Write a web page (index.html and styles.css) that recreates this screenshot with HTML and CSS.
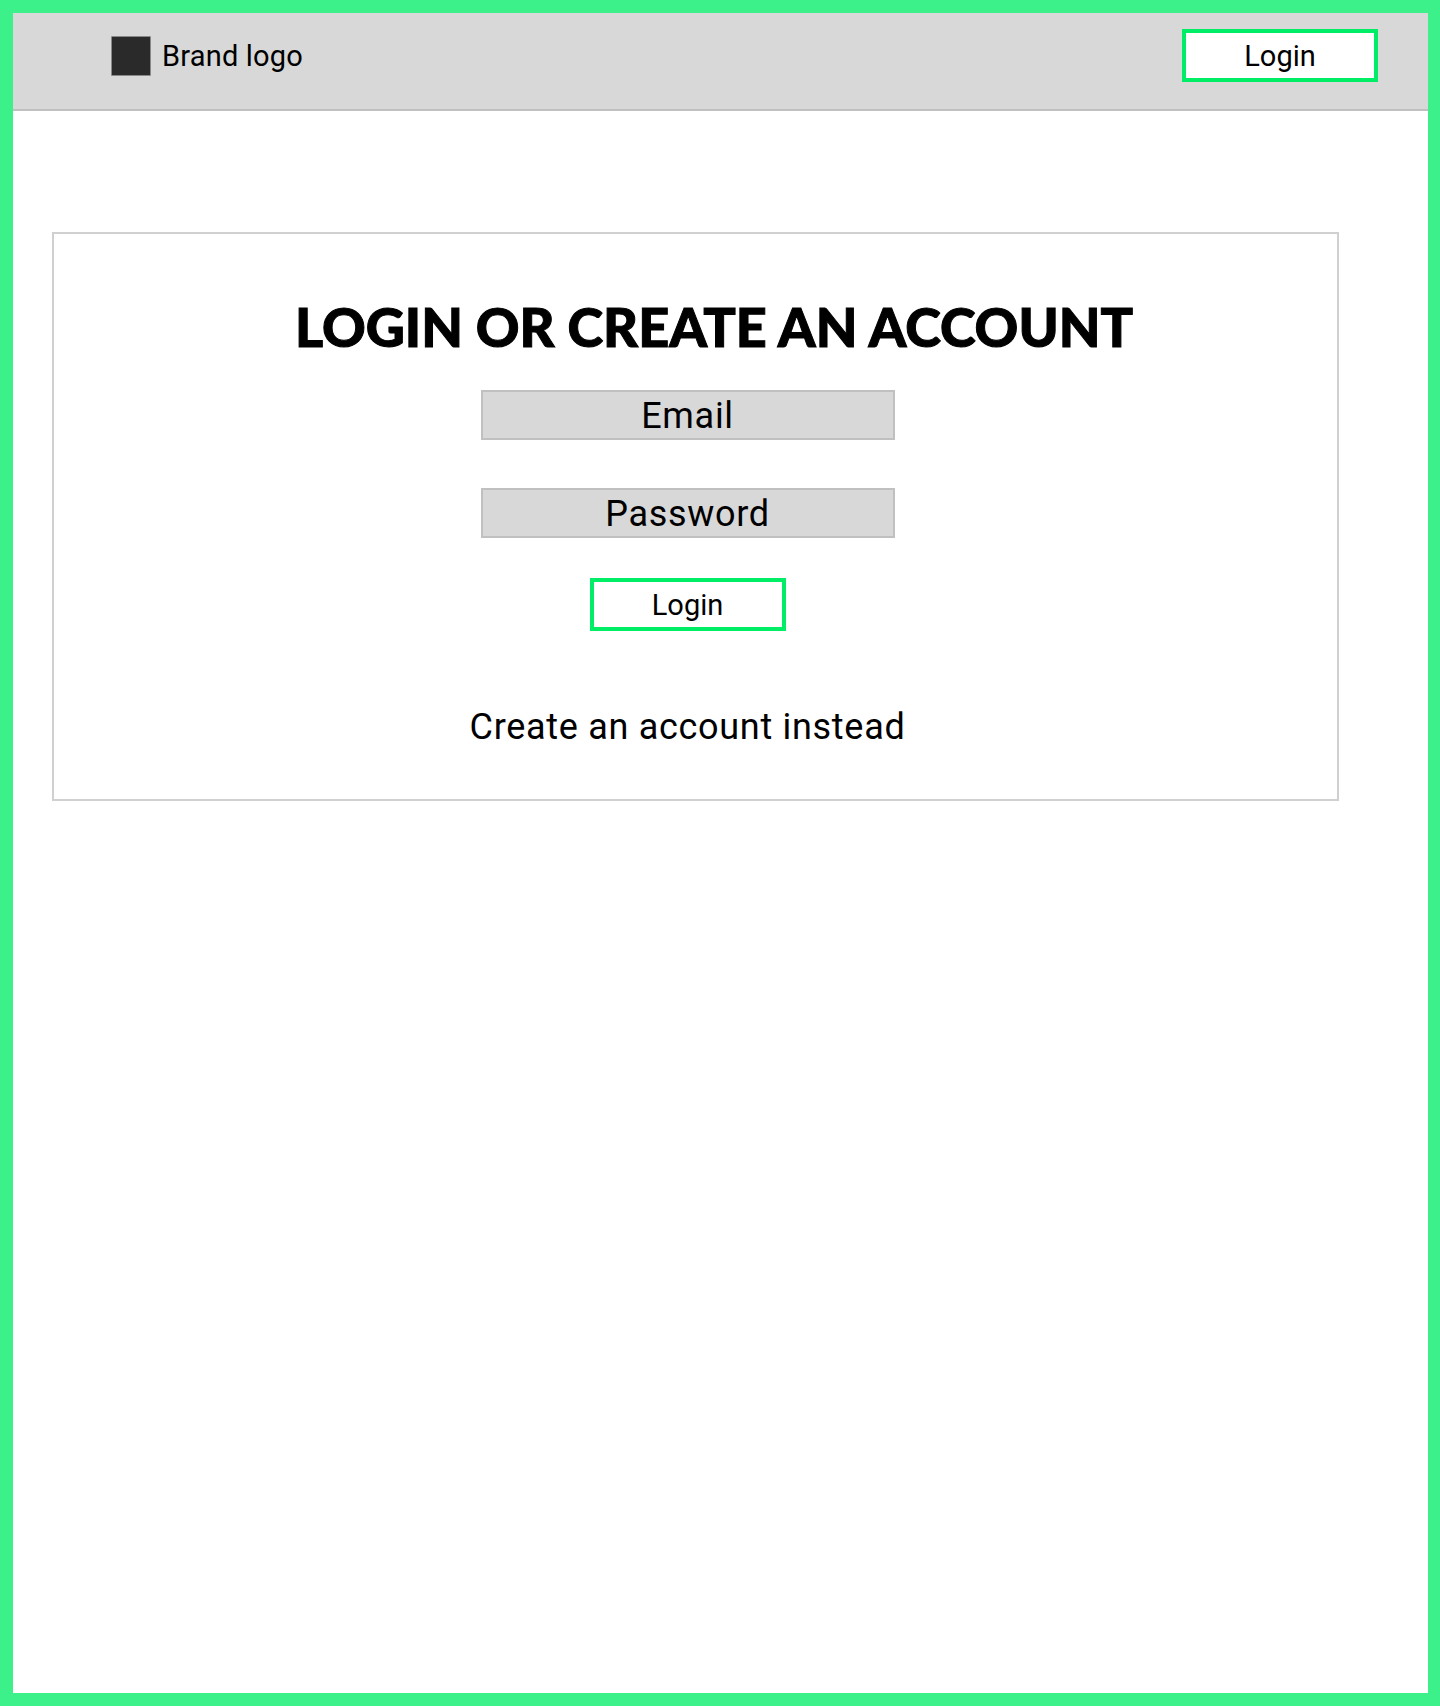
FILE: index.html
```html
<!DOCTYPE html>
<html lang="en">
<head>
    <meta charset="UTF-8">
    <meta name="viewport" content="width=device-width, initial-scale=1.0">
    <title>Login</title>
    <link rel="stylesheet" href="styles.css">
</head>
<body>
<div class="frame">
    <header class="topbar">
        <div class="brand">
            <div class="brand-mark"></div>
            <span class="brand-name">Brand logo</span>
        </div>
        <button class="btn" type="button">Login</button>
    </header>
    <main class="card">
        <h1>LOGIN OR CREATE AN ACCOUNT</h1>
        <form class="login-form">
            <div class="field">Email</div>
            <div class="field">Password</div>
            <button class="btn btn-submit" type="button">Login</button>
            <a class="switch-link">Create an account instead</a>
        </form>
    </main>
</div>
</body>
</html>
```

FILE: styles.css
```css
* {
    box-sizing: border-box;
}
body {
    margin: 0;
    font-family: Roboto, "Liberation Sans", sans-serif;
    color: #000;
    background-color: #fff;
}
.frame {
    height: 1706px;
    border: solid #3df18a;
    border-width: 13px 12px 13px 13px;
}
.topbar {
    display: flex;
    justify-content: space-between;
    align-items: flex-start;
    height: 98px;
    padding: 16px 50px 0 98px;
    background-color: #d8d8d8;
    border-bottom: 2px solid #c0c0c0;
}
.brand {
    display: flex;
    align-items: center;
    gap: 11px;
    margin-top: 7px;
}
.brand-mark {
    width: 40px;
    height: 40px;
    background-color: #2a2a2a;
    border: 1px solid #888;
    border-radius: 1px;
}
.brand-name {
    font-size: 29px;
    letter-spacing: 0.2px;
}
.btn {
    width: 196px;
    height: 53px;
    padding: 0;
    font-family: inherit;
    font-size: 29px;
    color: #000;
    background-color: #fff;
    border: 4px solid #00ee66;
}
.card {
    width: 1287px;
    height: 569px;
    margin: 121px 0 0 39px;
    padding-top: 59px;
    border: 2px solid #d0d0d0;
}
h1 {
    margin: 0 0 29px;
    padding-left: 37px;
    font-family: Lato, sans-serif;
    font-size: 54px;
    font-weight: 900;
    line-height: 68px;
    text-align: center;
    -webkit-text-stroke: 1px #000;
}
.login-form {
    display: flex;
    flex-direction: column;
    align-items: center;
    width: 1267px;
}
.field {
    width: 414px;
    height: 50px;
    margin-bottom: 48px;
    font-size: 36px;
    letter-spacing: 0.7px;
    line-height: 48px;
    text-align: center;
    background-color: #d8d8d8;
    border: 2px solid #c0c0c0;
}
.btn-submit {
    margin-top: -8px;
}
.switch-link {
    margin-top: 73px;
    font-size: 36px;
    letter-spacing: 0.7px;
    line-height: 46px;
}
```
